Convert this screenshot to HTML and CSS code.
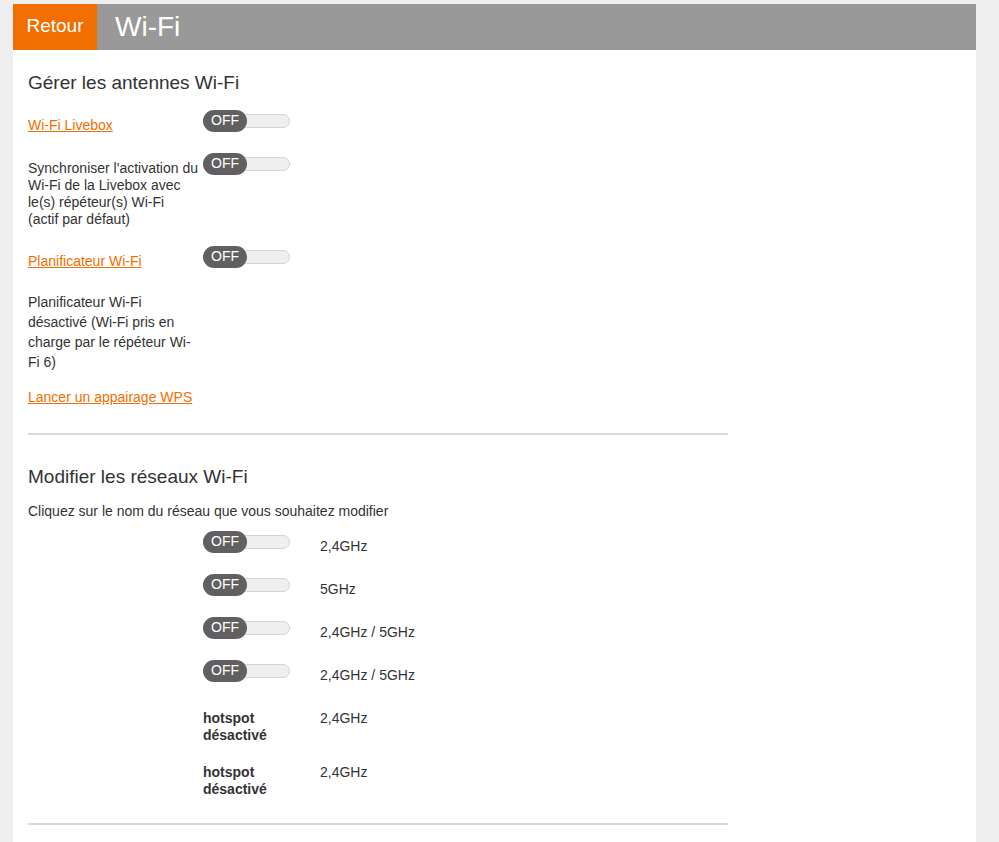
FILE: index.html
```html
<!DOCTYPE html>
<html lang="fr">
<head>
    <meta charset="UTF-8">
    <title>Wi-Fi</title>
    <link rel="stylesheet" href="styles.css">
</head>
<body>
    <div class="panel">
        <div class="header">
            <a class="back" href="#">Retour</a>
            <h1>Wi-Fi</h1>
        </div>

        <div class="content">
            <div class="section">
                <h2>Gérer les antennes Wi-Fi</h2>

                <div class="row">
                    <div class="label"><a href="#">Wi-Fi Livebox</a></div>
                    <div class="toggle"><span class="knob">OFF</span></div>
                </div>
                <div class="row sync">
                    <div class="label">Synchroniser l'activation du Wi-Fi de la Livebox avec le(s) répéteur(s) Wi-Fi<br>(actif par défaut)</div>
                    <div class="toggle"><span class="knob">OFF</span></div>
                </div>
                <div class="row">
                    <div class="label"><a href="#">Planificateur Wi-Fi</a></div>
                    <div class="toggle"><span class="knob">OFF</span></div>
                </div>

                <p class="info">Planificateur Wi-Fi désactivé (Wi-Fi pris en charge par le répéteur Wi-Fi 6)</p>
                <p class="wps"><a href="#">Lancer un appairage WPS</a></p>
            </div>

            <div class="section">
                <h2 class="second">Modifier les réseaux Wi-Fi</h2>
                <p class="hint">Cliquez sur le nom du réseau que vous souhaitez modifier</p>

                <div class="net-row">
                    <div></div>
                    <div class="toggle"><span class="knob">OFF</span></div>
                    <div class="label">2,4GHz</div>
                </div>
                <div class="net-row">
                    <div></div>
                    <div class="toggle"><span class="knob">OFF</span></div>
                    <div class="label">5GHz</div>
                </div>
                <div class="net-row">
                    <div></div>
                    <div class="toggle"><span class="knob">OFF</span></div>
                    <div class="label">2,4GHz / 5GHz</div>
                </div>
                <div class="net-row">
                    <div></div>
                    <div class="toggle"><span class="knob">OFF</span></div>
                    <div class="label">2,4GHz / 5GHz</div>
                </div>
                <div class="net-row hotspot">
                    <div></div>
                    <div class="label state">hotspot désactivé</div>
                    <div class="label">2,4GHz</div>
                </div>
                <div class="net-row hotspot">
                    <div></div>
                    <div class="label state">hotspot désactivé</div>
                    <div class="label">2,4GHz</div>
                </div>
            </div>
        </div>
    </div>
</body>
</html>
```

FILE: styles.css
```css
body {
    margin: 0;
    padding: 4px 23px 0 13px;
    background-color: #eee;
    font-family: "Liberation Sans", Arial, sans-serif;
    font-size: 14px;
    line-height: 17px;
    color: #333;
}
a {
    color: #f16e00;
}
.panel {
    background-color: #fff;
    min-height: 838px;
}
.header {
    display: flex;
    align-items: center;
    height: 46px;
    background-color: #999;
}
.back {
    display: flex;
    align-items: center;
    justify-content: center;
    box-sizing: border-box;
    width: 84px;
    height: 100%;
    padding-bottom: 3px;
    background-color: #f16e00;
    color: #fff;
    font-size: 19px;
    text-decoration: none;
}
.header h1 {
    margin: 0 0 0 18px;
    font-size: 28px;
    font-weight: normal;
    line-height: 32px;
    color: #fff;
}
.content {
    padding: 0 15px;
}
.section {
    width: 700px;
    border-bottom: 2px solid #d9d9d9;
    padding-bottom: 27px;
}
.section:last-child {
    padding-bottom: 25px;
}
h2 {
    margin: 22px 0 16px;
    font-size: 19px;
    font-weight: normal;
    line-height: 22px;
    color: #333;
}
h2.second {
    margin: 31px 0 15px;
}
.row {
    display: grid;
    grid-template-columns: 175px 1fr;
    align-items: start;
    margin-bottom: 19px;
}
.row.sync {
    margin-bottom: 18px;
}
.label {
    padding-top: 7px;
}
.toggle {
    position: relative;
    width: 87px;
    height: 22px;
}
.toggle::before {
    content: "";
    position: absolute;
    left: 0;
    right: 0;
    top: 4px;
    height: 12px;
    border: 1px solid #d4d4d4;
    border-radius: 7px;
    background-color: #efefef;
}
.knob {
    position: absolute;
    left: 0;
    top: 0;
    width: 44px;
    height: 22px;
    border-radius: 11px;
    background-color: #606060;
    color: #fff;
    font-size: 14px;
    line-height: 21px;
    text-align: center;
}
.info {
    width: 170px;
    margin: 22px 0 0;
    line-height: 20px;
}
.wps {
    margin: 17px 0 0;
}
.hint {
    margin: 0 0 11px;
}
.net-row {
    display: grid;
    grid-template-columns: 175px 117px 1fr;
    align-items: start;
    margin-bottom: 19px;
}
.net-row.hotspot {
    margin-bottom: 13px;
}
.net-row:last-child {
    margin-bottom: 0;
}
.state {
    font-weight: bold;
    width: 90px;
}
```
